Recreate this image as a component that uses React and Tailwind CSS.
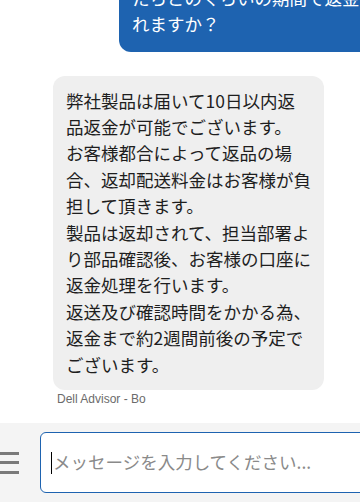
import React from 'react';

const jp = { fontFamily: '"Noto Sans CJK JP", "Noto Sans", sans-serif' };

const ADVISOR_LINES = [
  '弊社製品は届いて10日以内返',
  '品返金が可能でございます。',
  'お客様都合によって返品の場',
  '合、返却配送料金はお客様が負',
  '担して頂きます。',
  '製品は返却されて、担当部署よ',
  'り部品確認後、お客様の口座に',
  '返金処理を行います。',
  '返送及び確認時間をかかる為、',
  '返金まで約2週間前後の予定で',
  'ございます。',
];

function Hamburger() {
  return (
    <div className="flex flex-col gap-[6.5px]">
      <span className="block h-[3px] w-[19px] bg-[#7a7a7a]" />
      <span className="block h-[3px] w-[19px] bg-[#7a7a7a]" />
      <span className="block h-[3px] w-[19px] bg-[#7a7a7a]" />
    </div>
  );
}

export default function App() {
  return (
    <div className="flex h-[502px] w-[360px] flex-col overflow-hidden bg-white" style={jp}>
      {/* chat log, scrolled to the bottom */}
      <div className="flex flex-1 flex-col justify-end overflow-hidden pb-[17px]">
        <div className="flex justify-end">
          <div className="mr-[-20px] w-[261px] rounded-[12px] bg-[#1e63b0] pb-[14px] pl-[13px] pr-[20px] pt-[12px] text-[17.5px] leading-[26.4px] text-white whitespace-nowrap">
            返品したらどのくらいの期間で<br />
            たらどのくらいの期間で返金さ<br />
            れますか？
          </div>
        </div>

        <div className="mt-[24px] ml-[53px]">
          <div className="w-[271px] rounded-[12px] bg-[#efefef] px-[13px] py-[12px] text-[17.5px] leading-[26.4px] text-[#1e1e1e] whitespace-nowrap">
            {ADVISOR_LINES.map((line, i) => (
              <div key={i}>{line}</div>
            ))}
          </div>
          <p className="mt-[2px] ml-[4px] text-[12px] leading-[14px] text-[#6b6b6b]" style={{ fontFamily: '"Liberation Sans", Arial, sans-serif' }}>
            Dell Advisor - Bo
          </p>
        </div>
      </div>

      {/* input bar */}
      <div className="flex h-[79px] shrink-0 items-center bg-[#f4f4f4]">
        <div className="flex w-[40px] shrink-0 items-center">
          <Hamburger />
        </div>
        <div className="relative mr-[-12px] flex h-[61px] flex-1 items-center rounded-[6px] border border-[#1e63b0] bg-white pl-[10px]">
          <span className="absolute left-[10px] top-[19px] h-[22px] w-[1px] bg-black" />
          <input
            className="w-full bg-transparent pl-[2px] text-[17.5px] text-[#222] outline-none placeholder:text-[#8a8a8a]"
            placeholder="メッセージを入力してください..."
          />
        </div>
      </div>
    </div>
  );
}
